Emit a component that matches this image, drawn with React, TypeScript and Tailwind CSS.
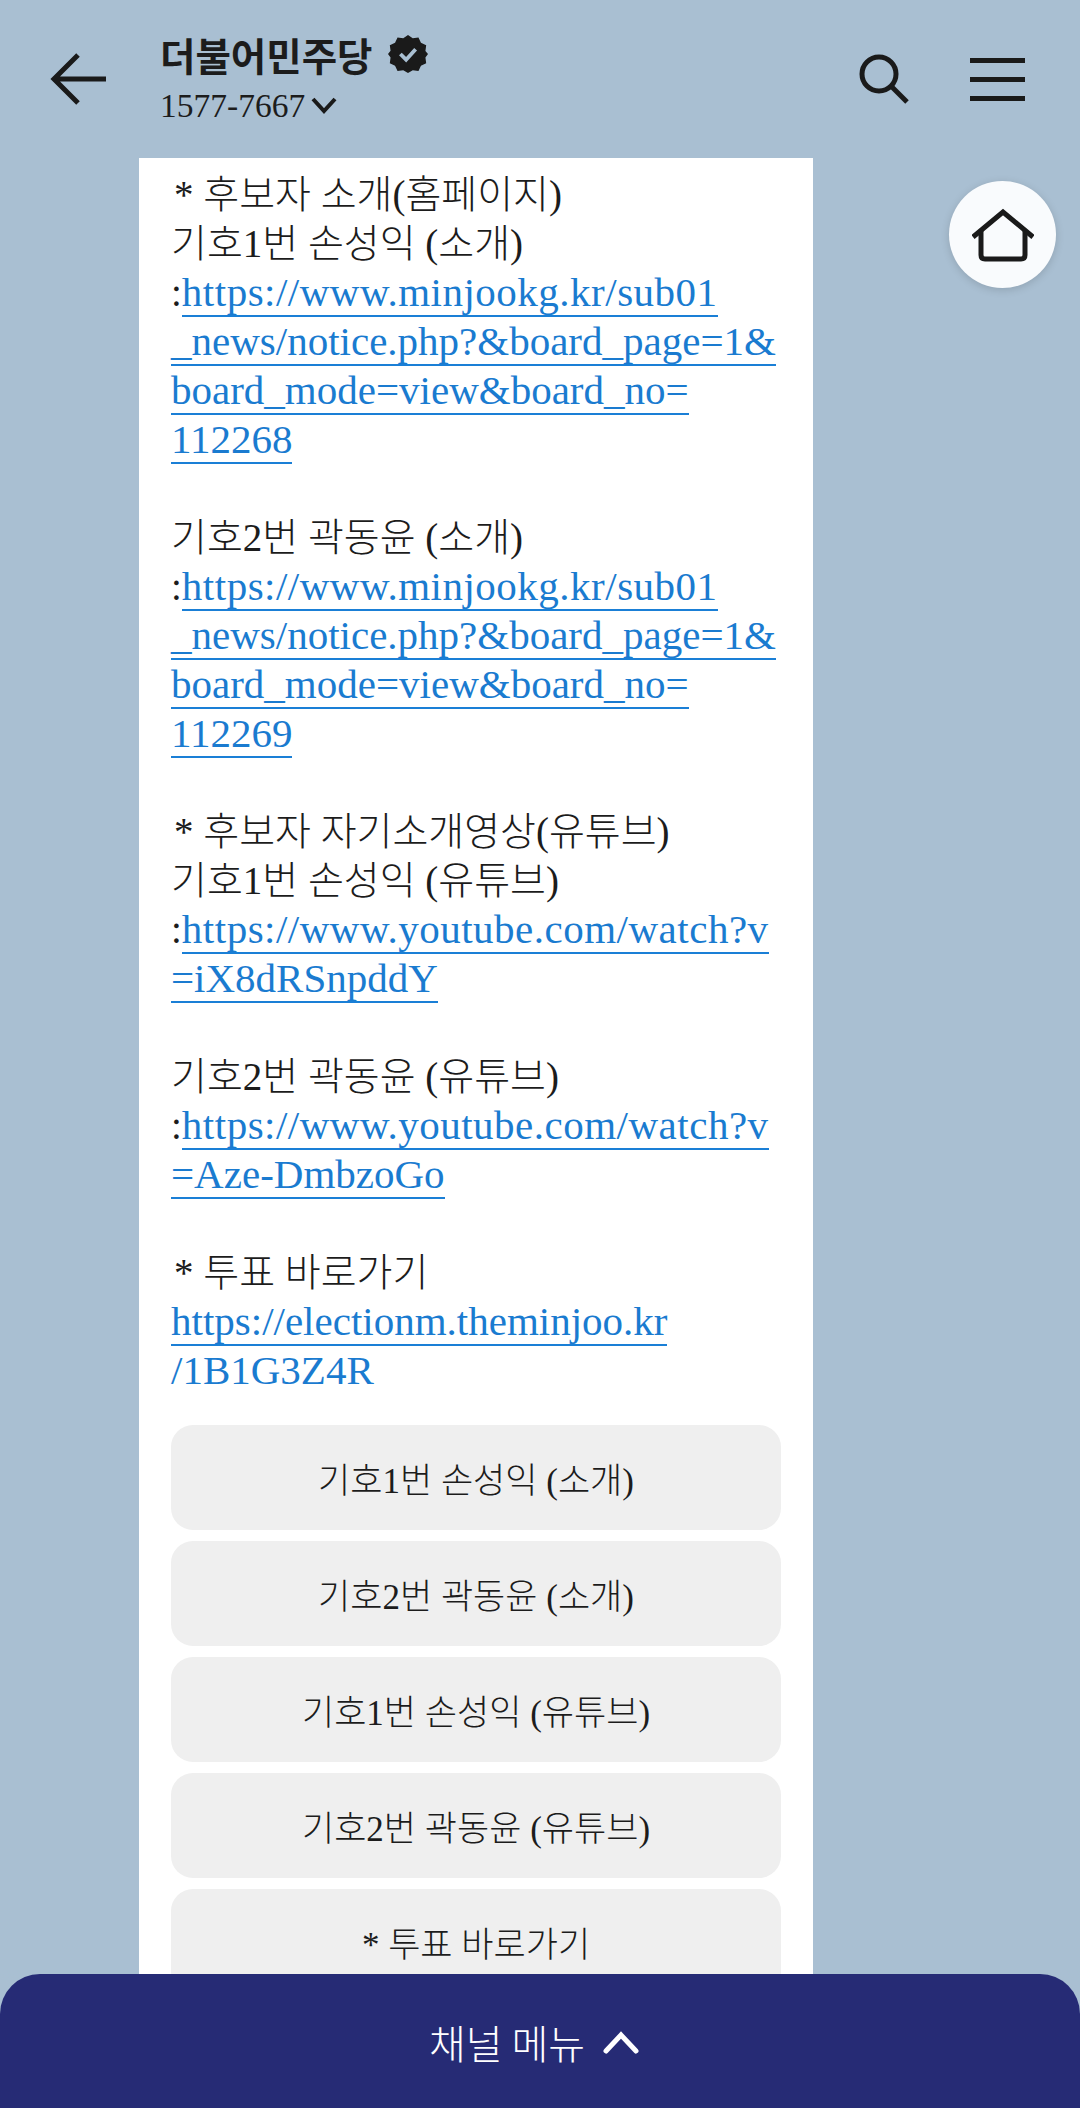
const bodyFont = "font-['Liberation_Serif','Noto_Sans_CJK_KR',serif]";

function Link({ children, wide }: { children: React.ReactNode; wide?: boolean }) {
  return (
    <span className={`border-b-2 border-[#1a7fd6] text-[41px] text-[#1a7bd0] ${wide ? "tracking-[0.5px]" : ""}`}>
      {children}
    </span>
  );
}

function Line({ children }: { children?: React.ReactNode }) {
  return <div className="h-[49px] whitespace-nowrap">{children}</div>;
}

const buttons = [
  "기호1번 손성익 (소개)",
  "기호2번 곽동윤 (소개)",
  "기호1번 손성익 (유튜브)",
  "기호2번 곽동윤 (유튜브)",
  "* 투표 바로가기",
];

export default function App() {
  return (
    <div className={`relative h-[2108px] w-[1080px] overflow-hidden bg-[#a9bfd2] text-[#1c1c1c] ${bodyFont}`}>
      <header className="flex h-[158px] items-start">
        <div className="ml-[50px] mt-[52px] w-[60px]">
          <svg width="58" height="54" viewBox="0 0 58 54" fill="none" stroke="#1a1a1a" strokeWidth="5">
            <path d="M56 27H5M28 3 4 27l24 24" />
          </svg>
        </div>
        <div className="ml-[50px] mt-[29px] flex-1">
          <div className="flex h-[50px] items-center gap-[15px]">
            <span className="font-['Noto_Sans_CJK_KR',sans-serif] text-[38.5px] font-bold leading-none">더불어민주당</span>
            <svg width="40" height="40" viewBox="0 0 42 42">
              <path
                fill="#1a1a1a"
                d="M21 1l5 3.5 6-.8 2.6 5.5 5.5 2.6-.8 6L42 21l-2.7 3.7.8 6-5.5 2.6-2.6 5.5-6-.8L21 41l-5-3-6 .8-2.6-5.5-5.5-2.6.8-6L0 21l2.7-3.3-.8-6 5.5-2.6L10 3.7l6 .8z"
              />
              <path d="M13 21l6 6 10-11" fill="none" stroke="#a9bfd2" strokeWidth="4" />
            </svg>
          </div>
          <div className="mt-[3px] flex items-center gap-[6px] text-[33.5px] leading-[48px]">
            <span>1577-7667</span>
            <svg width="26" height="18" viewBox="0 0 26 18" fill="none" stroke="#1a1a1a" strokeWidth="4">
              <path d="M2 2l11 12L24 2" />
            </svg>
          </div>
        </div>
        <svg className="mt-[53px]" width="54" height="52" viewBox="0 0 54 52" fill="none" stroke="#1a1a1a" strokeWidth="5">
          <circle cx="21" cy="21" r="17" />
          <path d="M33 33l16 16" />
        </svg>
        <div className="ml-[58px] mr-[55px] mt-[58px] flex w-[55px] flex-col gap-[14px]">
          <div className="h-[5px] bg-[#1a1a1a]" />
          <div className="h-[5px] bg-[#1a1a1a]" />
          <div className="h-[5px] bg-[#1a1a1a]" />
        </div>
      </header>

      <main className="ml-[139px] w-[674px] bg-white px-[32px] pt-[12px] text-[39px] font-light leading-[49px]">
        <Line><span className="pl-[3px]">* 후보자 소개(홈페이지)</span></Line>
        <Line>기호1번 손성익 (소개)</Line>
        <Line>:<Link wide>https://www.minjookg.kr/sub01</Link></Line>
        <Line><Link>_news/notice.php?&amp;board_page=1&amp;</Link></Line>
        <Line><Link>board_mode=view&amp;board_no=</Link></Line>
        <Line><Link>112268</Link></Line>
        <Line />
        <Line>기호2번 곽동윤 (소개)</Line>
        <Line>:<Link wide>https://www.minjookg.kr/sub01</Link></Line>
        <Line><Link>_news/notice.php?&amp;board_page=1&amp;</Link></Line>
        <Line><Link>board_mode=view&amp;board_no=</Link></Line>
        <Line><Link>112269</Link></Line>
        <Line />
        <Line><span className="pl-[3px]">* 후보자 자기소개영상(유튜브)</span></Line>
        <Line>기호1번 손성익 (유튜브)</Line>
        <Line>:<Link wide>https://www.youtube.com/watch?v</Link></Line>
        <Line><Link>=iX8dRSnpddY</Link></Line>
        <Line />
        <Line>기호2번 곽동윤 (유튜브)</Line>
        <Line>:<Link wide>https://www.youtube.com/watch?v</Link></Line>
        <Line><Link>=Aze-DmbzoGo</Link></Line>
        <Line />
        <Line><span className="pl-[3px]">* 투표 바로가기</span></Line>
        <Line><Link>https://electionm.theminjoo.kr</Link></Line>
        <Line><span className="text-[41px] text-[#1a7bd0]">/1B1G3Z4R</span></Line>

        <div className="mt-[30px] flex flex-col gap-[11px]">
          {buttons.map((label) => (
            <button
              key={label}
              type="button"
              className="flex h-[105px] w-full items-center justify-center rounded-[22px] bg-[#efefef] pt-[7px] text-[35px] font-light text-[#1c1c1c]"
            >
              {label}
            </button>
          ))}
        </div>
      </main>

      <button
        type="button"
        className="absolute left-[949px] top-[181px] flex h-[107px] w-[107px] items-center justify-center rounded-full bg-[#f9fbfd] shadow-[0_2px_8px_rgba(0,0,0,0.15)]"
      >
        <svg width="62" height="54" viewBox="0 0 62 54" fill="none" stroke="#1a1a1a" strokeWidth="5" strokeLinejoin="miter">
          <path d="M1 29 31 4l30 25" />
          <path d="M9 22v25q0 4 4 4h36q4 0 4-4V22" />
        </svg>
      </button>

      <div className="absolute bottom-0 left-0 flex h-[134px] w-full items-center justify-center gap-[18px] rounded-t-[40px] bg-[#262b75] pr-[12px] pt-[2px] text-white">
        <span className="font-['Noto_Sans_CJK_KR',sans-serif] text-[40px] font-light">채널 메뉴</span>
        <svg width="36" height="24" viewBox="0 0 36 24" fill="none" stroke="#ffffff" strokeWidth="5" strokeLinecap="round">
          <path d="M3 21 18 5l15 16" />
        </svg>
      </div>
    </div>
  );
}
